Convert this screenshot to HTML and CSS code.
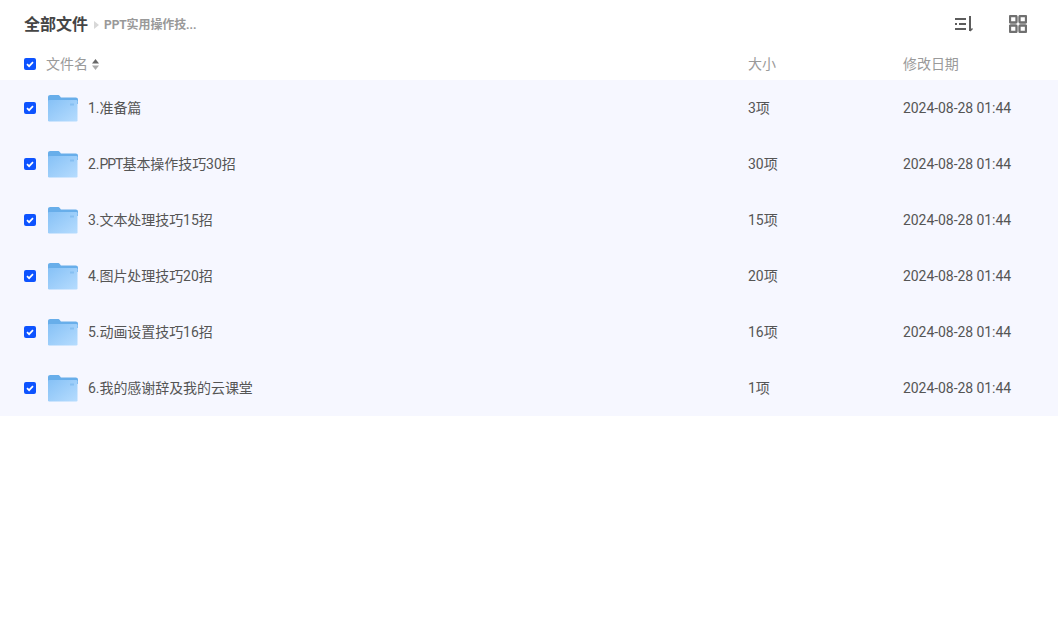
FILE: index.html
```html
<!DOCTYPE html>
<html lang="zh-CN">
<head>
<meta charset="utf-8">
<title>全部文件</title>
<link rel="stylesheet" href="styles.css">
</head>
<body>
<svg class="defs" width="0" height="0" aria-hidden="true">
  <defs>
    <linearGradient id="fb" x1="0" y1="0" x2="1" y2="1">
      <stop offset="0" stop-color="#86c1f6"/>
      <stop offset="1" stop-color="#b6dcfe"/>
    </linearGradient>
    <symbol id="folder" viewBox="0 0 30 28">
      <path d="M0 3C0 1.700 .9 1 2.200 1h7.600c1 0 1.600.4 2.200 1.200l.9 1.300h14.900c1.200 0 2.200.9 2.200 2.200V10H0z" fill="#68aeea"/>
      <rect x="0" y="6" width="29.500" height="21.500" rx="1.200" fill="url(#fb)"/>
      <rect x="22" y="9.500" width="4" height="2" fill="#86bff2"/>
    </symbol>
    <symbol id="check" viewBox="0 0 12 12">
      <rect width="12" height="12" rx="2" fill="#0d53ff"/>
      <path d="M3 6.200 5.100 8.200 9 4.200" fill="none" stroke="#fff" stroke-width="1.700"/>
    </symbol>
  </defs>
</svg>
<main class="page">
  <header class="topbar">
    <nav class="crumbs">
      <span class="crumb-root">全部文件</span>
      <svg class="crumb-sep" width="5" height="8" viewBox="0 0 5 8"><path d="M0 0 5 4 0 8z" fill="#d8d8d8"/></svg>
      <span class="crumb-cur">PPT实用操作技...</span>
    </nav>
    <div class="tools">
      <svg class="tool" width="18" height="16" viewBox="0 0 18 16" fill="none" stroke="#5c5c5c" stroke-width="2">
        <path d="M0 3h11M0 8h2M4 8h7M0 13h11"/>
        <path d="M15 0v15"/>
        <path d="M15 15l2.500-2.500" stroke-width="1.500"/>
      </svg>
      <svg class="tool" width="18" height="18" viewBox="0 0 18 18" fill="none" stroke="#707070" stroke-width="2.300">
        <rect x="1" y="1" width="6.500" height="6.500" rx=".8"/>
        <rect x="10.500" y="1" width="6.500" height="6.500" rx=".8"/>
        <rect x="1" y="10.500" width="6.500" height="6.500" rx=".8"/>
        <rect x="10.500" y="10.500" width="6.500" height="6.500" rx=".8"/>
      </svg>
    </div>
  </header>
  <div class="row head">
    <svg class="box"><use href="#check"/></svg>
    <div class="name-h">文件名
      <svg class="sort" width="7" height="11" viewBox="0 0 7 11"><path d="M3.500 0 7 4.500H0z" fill="#666"/><path d="M3.500 11 0 6.500h7z" fill="#aaa"/></svg>
    </div>
    <div class="size">大小</div>
    <div class="date">修改日期</div>
  </div>
  <div class="row item">
    <svg class="box"><use href="#check"/></svg>
    <svg class="folder"><use href="#folder"/></svg>
    <div class="name">1.准备篇</div><div class="size">3项</div><div class="date">2024-08-28 01:44</div>
  </div>
  <div class="row item">
    <svg class="box"><use href="#check"/></svg>
    <svg class="folder"><use href="#folder"/></svg>
    <div class="name">2.<span class="latin">PPT</span>基本操作技巧30招</div><div class="size">30项</div><div class="date">2024-08-28 01:44</div>
  </div>
  <div class="row item">
    <svg class="box"><use href="#check"/></svg>
    <svg class="folder"><use href="#folder"/></svg>
    <div class="name">3.文本处理技巧15招</div><div class="size">15项</div><div class="date">2024-08-28 01:44</div>
  </div>
  <div class="row item">
    <svg class="box"><use href="#check"/></svg>
    <svg class="folder"><use href="#folder"/></svg>
    <div class="name">4.图片处理技巧20招</div><div class="size">20项</div><div class="date">2024-08-28 01:44</div>
  </div>
  <div class="row item">
    <svg class="box"><use href="#check"/></svg>
    <svg class="folder"><use href="#folder"/></svg>
    <div class="name">5.动画设置技巧16招</div><div class="size">16项</div><div class="date">2024-08-28 01:44</div>
  </div>
  <div class="row item">
    <svg class="box"><use href="#check"/></svg>
    <svg class="folder"><use href="#folder"/></svg>
    <div class="name">6.我的感谢辞及我的云课堂</div><div class="size">1项</div><div class="date">2024-08-28 01:44</div>
  </div>
</main>
</body>
</html>
```
FILE: styles.css
```css
* { box-sizing: border-box; }
html, body { margin: 0; background: #fff; overflow: hidden; }
body {
  font-family: Roboto, "Noto Sans CJK SC", sans-serif;
  font-size: 14px;
  line-height: 20px;
  color: #555;
}
.defs { display: block; height: 0; position: absolute; }
.page { width: 1058px; height: 637px; }
.topbar {
  height: 48px;
  display: flex;
  align-items: center;
  justify-content: space-between;
  padding: 0 31px 0 24px;
}
.crumbs { display: flex; align-items: center; padding-top: 1px; }
.crumb-root { font-size: 16px; font-weight: 700; color: #454545; }
.crumb-sep { margin: 0 5px 0 6px; }
.crumb-cur { font-size: 12px; font-weight: 700; color: #999; letter-spacing: -0.1px; padding-top: 1px; }
.tools { display: flex; align-items: center; gap: 36px; }
.tool { display: block; }
.row { display: flex; align-items: center; padding-left: 24px; }
.head { height: 32px; color: #9a9a9a; }
.item { height: 56px; background: #f6f7ff; }
.box { width: 12px; height: 12px; flex: none; margin-right: 10px; }
.folder { width: 30px; height: 28px; flex: none; margin-left: 1.5px; margin-right: 10.5px; }
.name-h { width: 702px; display: flex; align-items: center; gap: 4px; }
.name { width: 660px; letter-spacing: -0.06px; }
.latin { letter-spacing: -1px; }
.size { width: 155px; }
.date { flex: 1; letter-spacing: -0.06px; }
```
